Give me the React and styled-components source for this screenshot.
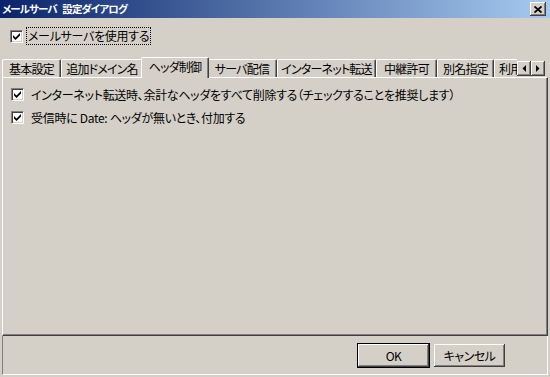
import React from 'react';
import styled, { createGlobalStyle } from 'styled-components';

const Global = createGlobalStyle`
  html, body { margin: 0; padding: 0; }
  body {
    background: #d4d0c8;
    font-family: "Noto Sans CJK JP", "Noto Sans", sans-serif;
    font-size: 12px;
    letter-spacing: -0.3px;
    color: #000;
    font-feature-settings: "palt";
  }
`;

const Window = styled.div`
  width: 550px;
  height: 377px;
  background: #d4d0c8;
  display: flex;
  flex-direction: column;
  overflow: hidden;
`;

const TitleBar = styled.div`
  flex: none;
  height: 18px;
  background: linear-gradient(to right, #0a246a, #a6caf0);
  display: flex;
  align-items: center;
  justify-content: space-between;
  padding: 0 4px 0 2px;
  color: #fff;
`;

const TitleText = styled.span`
  font-size: 10.5px;
  font-weight: bold;
  letter-spacing: -0.9px;
  word-spacing: 4px;
  line-height: 18px;
  white-space: nowrap;
`;

const CloseButton = styled.div`
  width: 16px;
  height: 14px;
  box-sizing: border-box;
  background: #d4d0c8;
  box-shadow: inset -1px -1px #404040, inset 1px 1px #fff, inset -2px -2px #808080, inset 2px 2px #d4d0c8;
  display: flex;
  align-items: center;
  justify-content: center;
`;

const Content = styled.div`
  flex: 1;
  display: flex;
  flex-direction: column;
  padding: 0 2px;
`;

const TopRow = styled.div`
  display: flex;
  align-items: center;
  margin: 9px 0 12px 8px;
  gap: 3px;
`;

const CheckBox = styled.span`
  flex: none;
  width: 13px;
  height: 13px;
  box-sizing: border-box;
  background: #fff;
  border-top: 1px solid #808080;
  border-left: 1px solid #808080;
  border-bottom: 1px solid #fff;
  border-right: 1px solid #fff;
  box-shadow: inset 1px 1px #404040, inset -1px -1px #d4d0c8;
  display: flex;
  align-items: center;
  justify-content: center;
`;

const FocusLabel = styled.span`
  border: 1px dotted #000;
  padding: 0 1px;
  line-height: 16px;
  white-space: nowrap;
`;

const TabStrip = styled.div`
  position: relative;
  z-index: 1;
  height: 21px;
  display: flex;
  align-items: flex-end;
`;

const TabViewport = styled.div`
  flex: 1;
  height: 21px;
  overflow: hidden;
  display: flex;
  align-items: flex-end;
`;

const Tab = styled.div`
  flex: none;
  box-sizing: border-box;
  width: ${p => p.$w}px;
  height: ${p => (p.$active ? 21 : 18)}px;
  margin: ${p => (p.$active ? '0 -2px 0 -2px' : '0 0 1px 0')};
  padding-bottom: ${p => (p.$active ? 2 : 0)}px;
  position: relative;
  z-index: ${p => (p.$active ? 2 : 1)};
  background: #d4d0c8;
  border-top: 1px solid #fff;
  border-left: 1px solid #fff;
  border-right: 1px solid #404040;
  box-shadow: inset -1px 0 #808080;
  border-radius: 2px 2px 0 0;
  display: flex;
  align-items: center;
  justify-content: ${p => (p.$clipped ? 'flex-start' : 'center')};
  padding-left: ${p => (p.$clipped ? 4 : 0)}px;
  letter-spacing: -0.8px;
  white-space: nowrap;
  overflow: hidden;
  line-height: 16px;
`;

const ArrowGroup = styled.div`
  flex: none;
  display: flex;
  margin: 0 3px 2px 0;
`;

const ArrowButton = styled.div`
  width: 14px;
  height: 15px;
  box-sizing: border-box;
  background: #d4d0c8;
  box-shadow: inset -1px -1px #404040, inset 1px 1px #fff, inset -2px -2px #808080;
  display: flex;
  align-items: center;
  justify-content: center;
`;

const Panel = styled.div`
  margin-top: -1px;
  height: 259px;
  box-sizing: border-box;
  border-top: 1px solid #fff;
  border-left: 1px solid #fff;
  border-right: 1px solid #404040;
  border-bottom: 1px solid #404040;
  box-shadow: inset -1px -1px #808080;
  padding: 8px 0 0 8px;
  display: flex;
  flex-direction: column;
  gap: 7px;
`;

const OptionRow = styled.div`
  display: flex;
  align-items: center;
  height: 16px;
  gap: 7px;
  white-space: nowrap;
`;

const Footer = styled.div`
  height: 39px;
  box-sizing: border-box;
  border-left: 1px solid #808080;
  border-right: 1px solid #fff;
  border-bottom: 1px solid #fff;
  display: flex;
  justify-content: flex-end;
  align-items: flex-start;
  padding: 8px 42px 0 0;
  gap: 5px;
`;

const Button = styled.button`
  width: 71px;
  height: 23px;
  box-sizing: border-box;
  border: none;
  margin: 0;
  padding: 0;
  background: #d4d0c8;
  font-family: "Noto Sans CJK JP", "Noto Sans", sans-serif;
  font-size: 12px;
  letter-spacing: -0.5px;
  font-feature-settings: "palt";
  color: #000;
  box-shadow: inset -1px -1px #404040, inset 1px 1px #fff, inset -2px -2px #808080;
  outline: ${p => (p.$default ? '1px solid #000' : 'none')};
`;

const Check = () => (
  <svg width="7" height="7" viewBox="0 0 7 7">
    <polygon points="0,2 2.5,4.5 7,0 7,2.6 2.5,7 0,4.6" fill="#000" />
  </svg>
);

const tabs = [
  { label: '基本設定', w: 59 },
  { label: '追加ドメイン名', w: 82 },
  { label: 'ヘッダ制御', w: 68, active: true },
  { label: 'サーバ配信', w: 70 },
  { label: 'インターネット転送', w: 99 },
  { label: '中継許可', w: 61 },
  { label: '別名指定', w: 57 },
  { label: '利用制限', w: 60, clipped: true },
];

export default function App() {
  return (
    <>
      <Global />
      <Window>
        <TitleBar>
          <TitleText>メールサーバ 設定ダイアログ</TitleText>
          <CloseButton>
            <svg width="8" height="7" viewBox="0 0 8 7">
              <path d="M0.5 0.5 L7.5 6.5 M7.5 0.5 L0.5 6.5" stroke="#000" strokeWidth="1.8" />
            </svg>
          </CloseButton>
        </TitleBar>
        <Content>
          <TopRow>
            <CheckBox><Check /></CheckBox>
            <FocusLabel>メールサーバを使用する</FocusLabel>
          </TopRow>
          <TabStrip>
            <TabViewport>
              {tabs.map(t => (
                <Tab key={t.label} $w={t.w} $active={t.active} $clipped={t.clipped}>{t.label}</Tab>
              ))}
            </TabViewport>
            <ArrowGroup>
              <ArrowButton>
                <svg width="4" height="7" viewBox="0 0 4 7"><polygon points="4,0 4,7 0.5,3.5" fill="#000" /></svg>
              </ArrowButton>
              <ArrowButton>
                <svg width="4" height="7" viewBox="0 0 4 7"><polygon points="0,0 0,7 3.5,3.5" fill="#000" /></svg>
              </ArrowButton>
            </ArrowGroup>
          </TabStrip>
          <Panel>
            <OptionRow>
              <CheckBox><Check /></CheckBox>
              <span>インターネット転送時、余計なヘッダをすべて削除する（チェックすることを推奨します）</span>
            </OptionRow>
            <OptionRow>
              <CheckBox><Check /></CheckBox>
              <span>受信時に Date: ヘッダが無いとき、付加する</span>
            </OptionRow>
          </Panel>
          <Footer>
            <Button $default>OK</Button>
            <Button>キャンセル</Button>
          </Footer>
        </Content>
      </Window>
    </>
  );
}
